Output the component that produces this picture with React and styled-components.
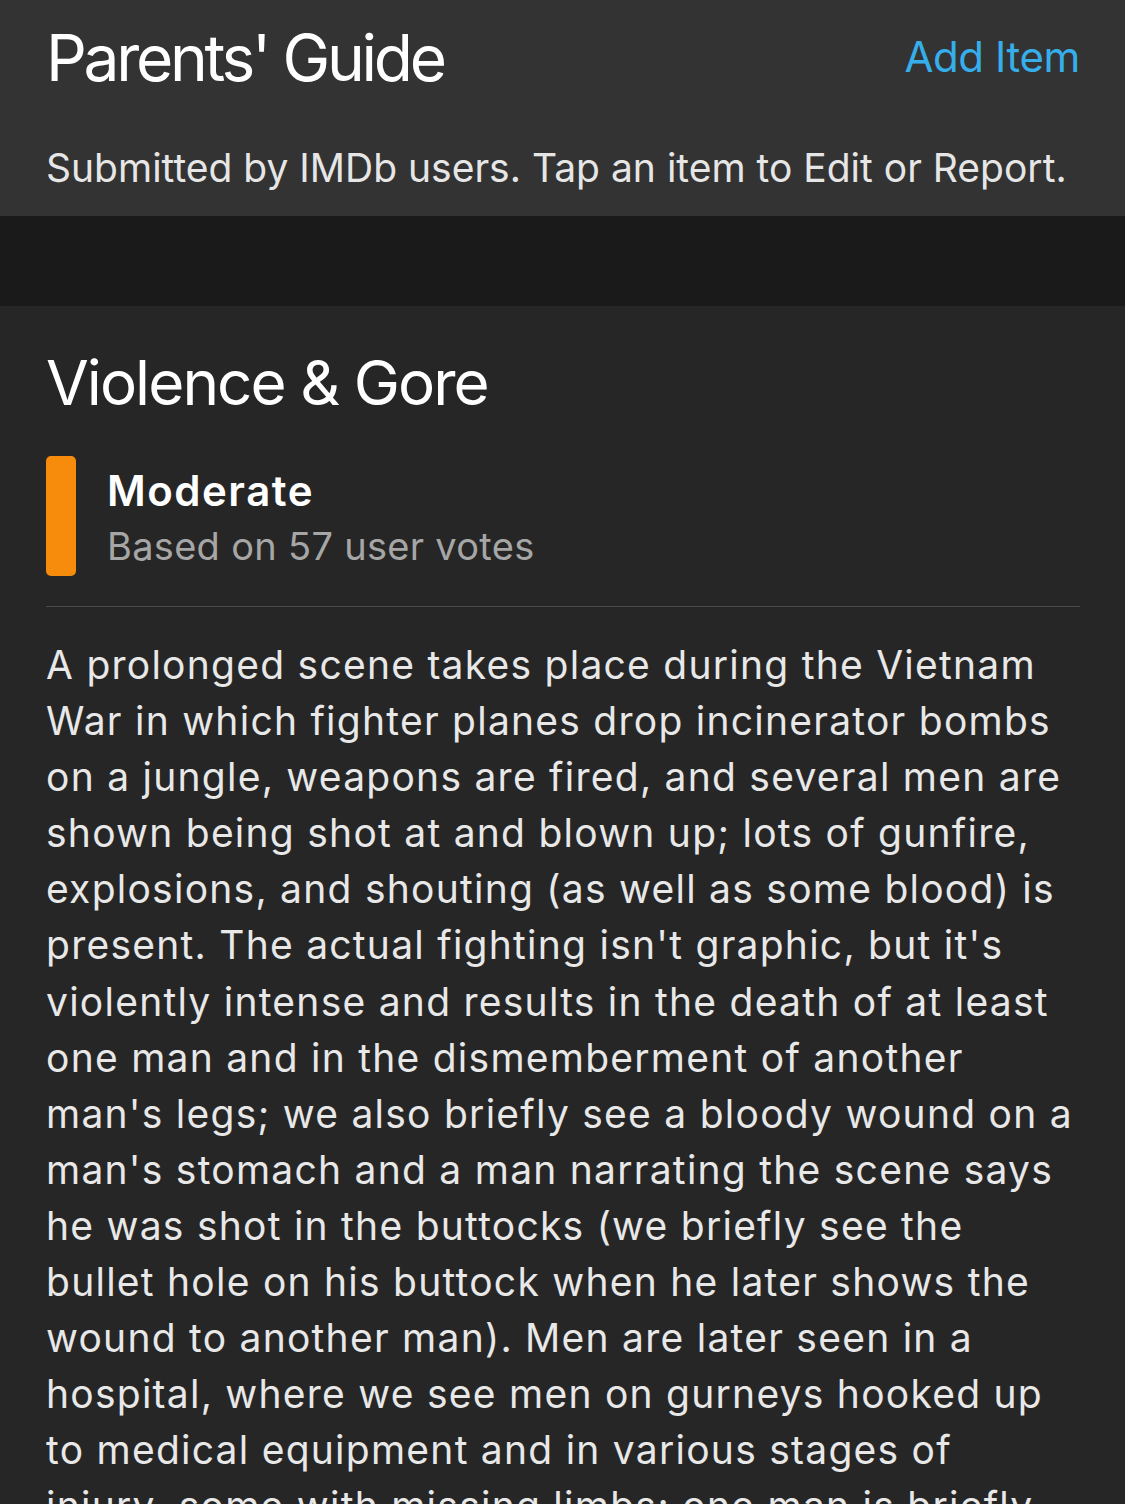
import React from 'react';
import styled, { createGlobalStyle } from 'styled-components';

const GlobalStyle = createGlobalStyle`
  html, body {
    margin: 0;
    padding: 0;
    background: #262626;
  }
  body {
    font-family: Inter, "Noto Sans", sans-serif;
    -webkit-font-smoothing: antialiased;
  }
`;

const Header = styled.header`
  background: #333333;
  padding: 22px 46px 24px 46px;
`;

const TitleRow = styled.div`
  display: flex;
  align-items: center;
  justify-content: space-between;
`;

const PageTitle = styled.h1`
  margin: 0;
  font-size: 64px;
  font-weight: 400;
  letter-spacing: -3.3px;
  line-height: 72px;
  color: #ffffff;
`;

const AddButton = styled.button`
  background: none;
  border: none;
  padding: 0 0 4px 0;
  margin-right: -1px;
  font-family: inherit;
  font-size: 42px;
  letter-spacing: -0.4px;
  color: #36aeea;
  cursor: pointer;
`;

const Note = styled.p`
  margin: 50px 0 0 0;
  font-size: 39px;
  line-height: 48px;
  letter-spacing: 0;
  color: #e6e6e6;
`;

const Spacer = styled.div`
  height: 90px;
  background: #1a1a1a;
`;

const Section = styled.section`
  background: #262626;
  padding: 40px 45px 0 46px;
`;

const SectionTitle = styled.h2`
  margin: 0;
  font-size: 62px;
  font-weight: 400;
  letter-spacing: -1.95px;
  line-height: 74px;
  color: #ffffff;
`;

const Rating = styled.div`
  display: flex;
  gap: 31px;
  margin-top: 36px;
  padding-bottom: 30px;
  border-bottom: 1px solid #4a4a4a;
`;

const SeverityBar = styled.div`
  width: 30px;
  height: 120px;
  border-radius: 5px;
  background: ${(p) => p.color};
  flex-shrink: 0;
`;

const RatingText = styled.div`
  display: flex;
  flex-direction: column;
  padding-top: 8px;
`;

const Severity = styled.div`
  font-size: 42px;
  font-weight: 600;
  line-height: 54px;
  letter-spacing: 1.5px;
  color: #ffffff;
`;

const Votes = styled.div`
  font-size: 38px;
  line-height: 56px;
  letter-spacing: 0.3px;
  color: #a6a6a6;
`;

const Body = styled.p`
  margin: 30px 0 0 0;
  font-size: 39px;
  line-height: 56.1px;
  letter-spacing: 1.25px;
  color: #e8e8e8;
`;

const Line = styled.span`
  display: block;
  white-space: nowrap;
`;

const lines = [
  'A prolonged scene takes place during the Vietnam',
  'War in which fighter planes drop incinerator bombs',
  'on a jungle, weapons are fired, and several men are',
  'shown being shot at and blown up; lots of gunfire,',
  'explosions, and shouting (as well as some blood) is',
  "present. The actual fighting isn't graphic, but it's",
  'violently intense and results in the death of at least',
  'one man and in the dismemberment of another',
  "man's legs; we also briefly see a bloody wound on a",
  "man's stomach and a man narrating the scene says",
  'he was shot in the buttocks (we briefly see the',
  'bullet hole on his buttock when he later shows the',
  'wound to another man). Men are later seen in a',
  'hospital, where we see men on gurneys hooked up',
  'to medical equipment and in various stages of',
  'injury, some with missing limbs; one man is briefly',
  'shown with a bandaged stump.',
];

export default function App() {
  return (
    <>
      <GlobalStyle />
      <Header>
        <TitleRow>
          <PageTitle>Parents' Guide</PageTitle>
          <AddButton>Add Item</AddButton>
        </TitleRow>
        <Note>Submitted by IMDb users. Tap an item to Edit or Report.</Note>
      </Header>
      <Spacer />
      <Section>
        <SectionTitle>Violence &amp; Gore</SectionTitle>
        <Rating>
          <SeverityBar color="#f68b0c" />
          <RatingText>
            <Severity>Moderate</Severity>
            <Votes>Based on 57 user votes</Votes>
          </RatingText>
        </Rating>
        <Body>
          {lines.map((l, i) => (
            <Line key={i}>{l}</Line>
          ))}
        </Body>
      </Section>
    </>
  );
}
